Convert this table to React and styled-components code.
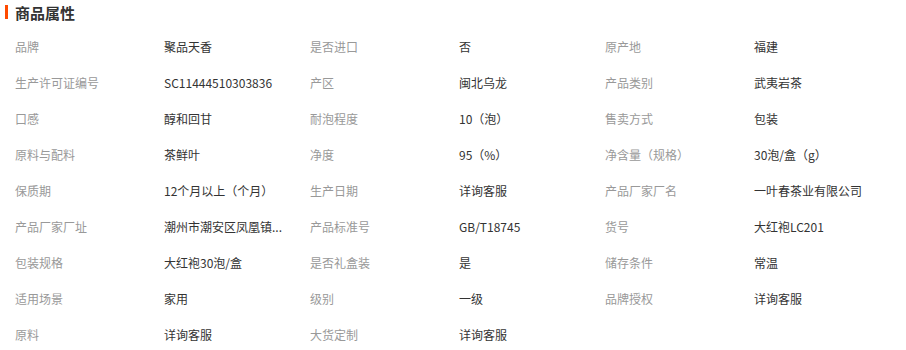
import React from 'react'
import styled, { createGlobalStyle } from 'styled-components'

const GlobalStyle = createGlobalStyle`
    body {
        margin: 0;
        background: #fff;
        font-family: "Microsoft YaHei", "Noto Sans CJK SC", sans-serif;
    }
`;

// 제목 영역
const Title = styled.div`
    display: flex;
    align-items: center;
    height: 24px;
    padding-left: 5px;
    font-size: 15px;
    font-weight: bold;
    color: #333;
`;

// 주황 막대
const Bar = styled.span`
    width: 3px;
    height: 14px;
    background: #ff4a00;
    margin-right: 7px;
`;

const Grid = styled.div`
    display: grid;
    grid-template-columns: repeat(3, 295px);
    padding: 4px 0 0 15px;
`;

const Cell = styled.div`
    display: grid;
    grid-template-columns: 149px 146px;
    align-items: center;
    height: 36px;
    font-size: 12px;
`;

const Label = styled.span`
    color: #999;
`;

const Value = styled.span`
    color: #333;
    white-space: nowrap;
`;

const attrs = [
    ['品牌', '聚品天香'], ['是否进口', '否'], ['原产地', '福建'],
    ['生产许可证编号', 'SC11444510303836'], ['产区', '闽北乌龙'], ['产品类别', '武夷岩茶'],
    ['口感', '醇和回甘'], ['耐泡程度', '10（泡）'], ['售卖方式', '包装'],
    ['原料与配料', '茶鲜叶'], ['净度', '95（%）'], ['净含量（规格）', '30泡/盒（g）'],
    ['保质期', '12个月以上（个月）'], ['生产日期', '详询客服'], ['产品厂家厂名', '一叶春茶业有限公司'],
    ['产品厂家厂址', '潮州市潮安区凤凰镇...'], ['产品标准号', 'GB/T18745'], ['货号', '大红袍LC201'],
    ['包装规格', '大红袍30泡/盒'], ['是否礼盒装', '是'], ['储存条件', '常温'],
    ['适用场景', '家用'], ['级别', '一级'], ['品牌授权', '详询客服'],
    ['原料', '详询客服'], ['大货定制', '详询客服'],
]

const App = () => {
    return (
        <>
            <GlobalStyle/>
            <Title><Bar/>商品属性</Title>
            <Grid>
                {attrs.map(([k, v]) => (
                    <Cell key={k}>
                        <Label>{k}</Label>
                        <Value>{v}</Value>
                    </Cell>
                ))}
            </Grid>
        </>
    )
}

export default App
